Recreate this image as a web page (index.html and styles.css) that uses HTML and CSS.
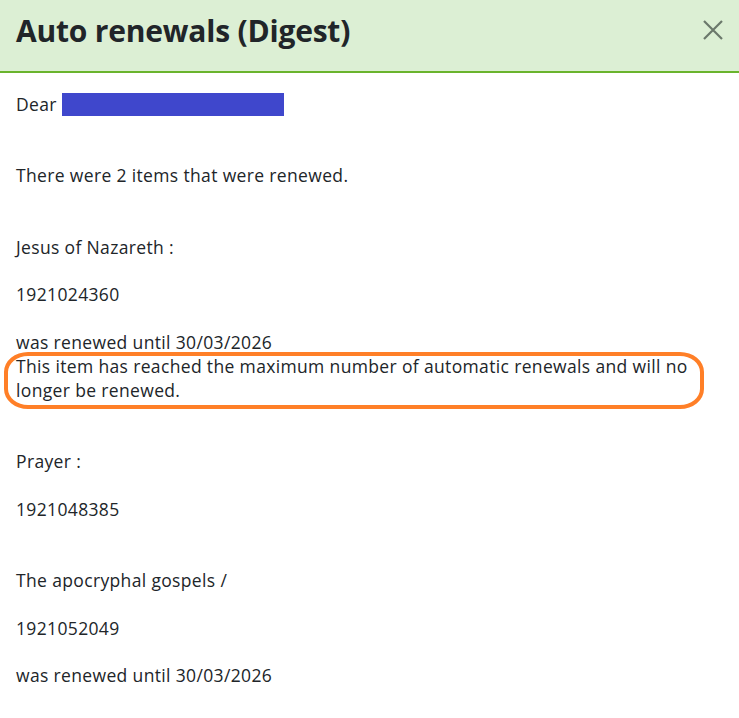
FILE: index.html
```html
<!DOCTYPE html>
<html lang="en">
<head>
    <meta charset="UTF-8">
    <meta name="viewport" content="width=device-width, initial-scale=1.0">
    <title>Auto renewals (Digest)</title>
    <link rel="stylesheet" href="styles.css">
</head>
<body>
    <div class="modal">
        <div class="modal-header">
            <h1 class="modal-title">Auto renewals (Digest)</h1>
            <button class="close" aria-label="Close">
                <svg width="22" height="22" viewBox="0 0 22 22">
                    <path d="M2 2 L20 20 M20 2 L2 20" stroke="#6b786b" stroke-width="2.2" fill="none"/>
                </svg>
            </button>
        </div>
        <div class="modal-body">
            <p class="gap2">Dear <span class="redact"></span></p>
            <p class="gap2">There were 2 items that were renewed.</p>

            <p>Jesus of Nazareth :</p>
            <p>1921024360</p>
            <p class="tight">was renewed until 30/03/2026</p>
            <p class="gap2 note">This item has reached the maximum number of automatic renewals and will no longer be renewed.</p>

            <p>Prayer :</p>
            <p class="gap2">1921048385</p>

            <p>The apocryphal gospels /</p>
            <p>1921052049</p>
            <p>was renewed until 30/03/2026</p>
        </div>
    </div>
</body>
</html>
```

FILE: styles.css
```css
* {
    margin:0;
    padding:0;
    box-sizing: border-box;
}
body {
    font-family: "Open Sans", "Noto Sans", sans-serif;
    color:#212529;
    background: #fff;
}
.modal-header {
    height:73px;
    background-color: #dcefd4;
    border-bottom: 2px solid #6ab42d;
    display: flex;
    flex-direction: row;
    justify-content: space-between;
    align-items: center;
    padding:0 14px 0 16px;
}
.modal-title {
    font-size: 30px;
    font-weight: 700;
    letter-spacing: -0.2px;
    line-height: 1;
    margin-top: -10px;
}
.close {
    border:none;
    background: none;
    width: 24px;
    height:24px;
    display: flex;
    justify-content: center;
    align-items: center;
    margin-top: -12px;
}
.modal-body {
    padding:20px 16px;
    font-size: 17.5px;
    letter-spacing: 0.35px;
    line-height: 23.8px;
}
.modal-body p {
    margin-bottom: 23.8px;
}
.modal-body p.tight {
    margin-bottom: 0;
}
.modal-body p.gap2 {
    margin-bottom: 47.6px;
}
.redact {
    display: inline-block;
    width: 222px;
    height:23px;
    background-color: #3f47cc;
    vertical-align: -5px;
}
.note {
    position: relative;
}
.note::after {
    content: "";
    position: absolute;
    left:-12px;
    right:19px;
    top:-3px;
    bottom:-7px;
    border:4px solid #ff7f27;
    border-radius: 24px / 20px;
}
```
